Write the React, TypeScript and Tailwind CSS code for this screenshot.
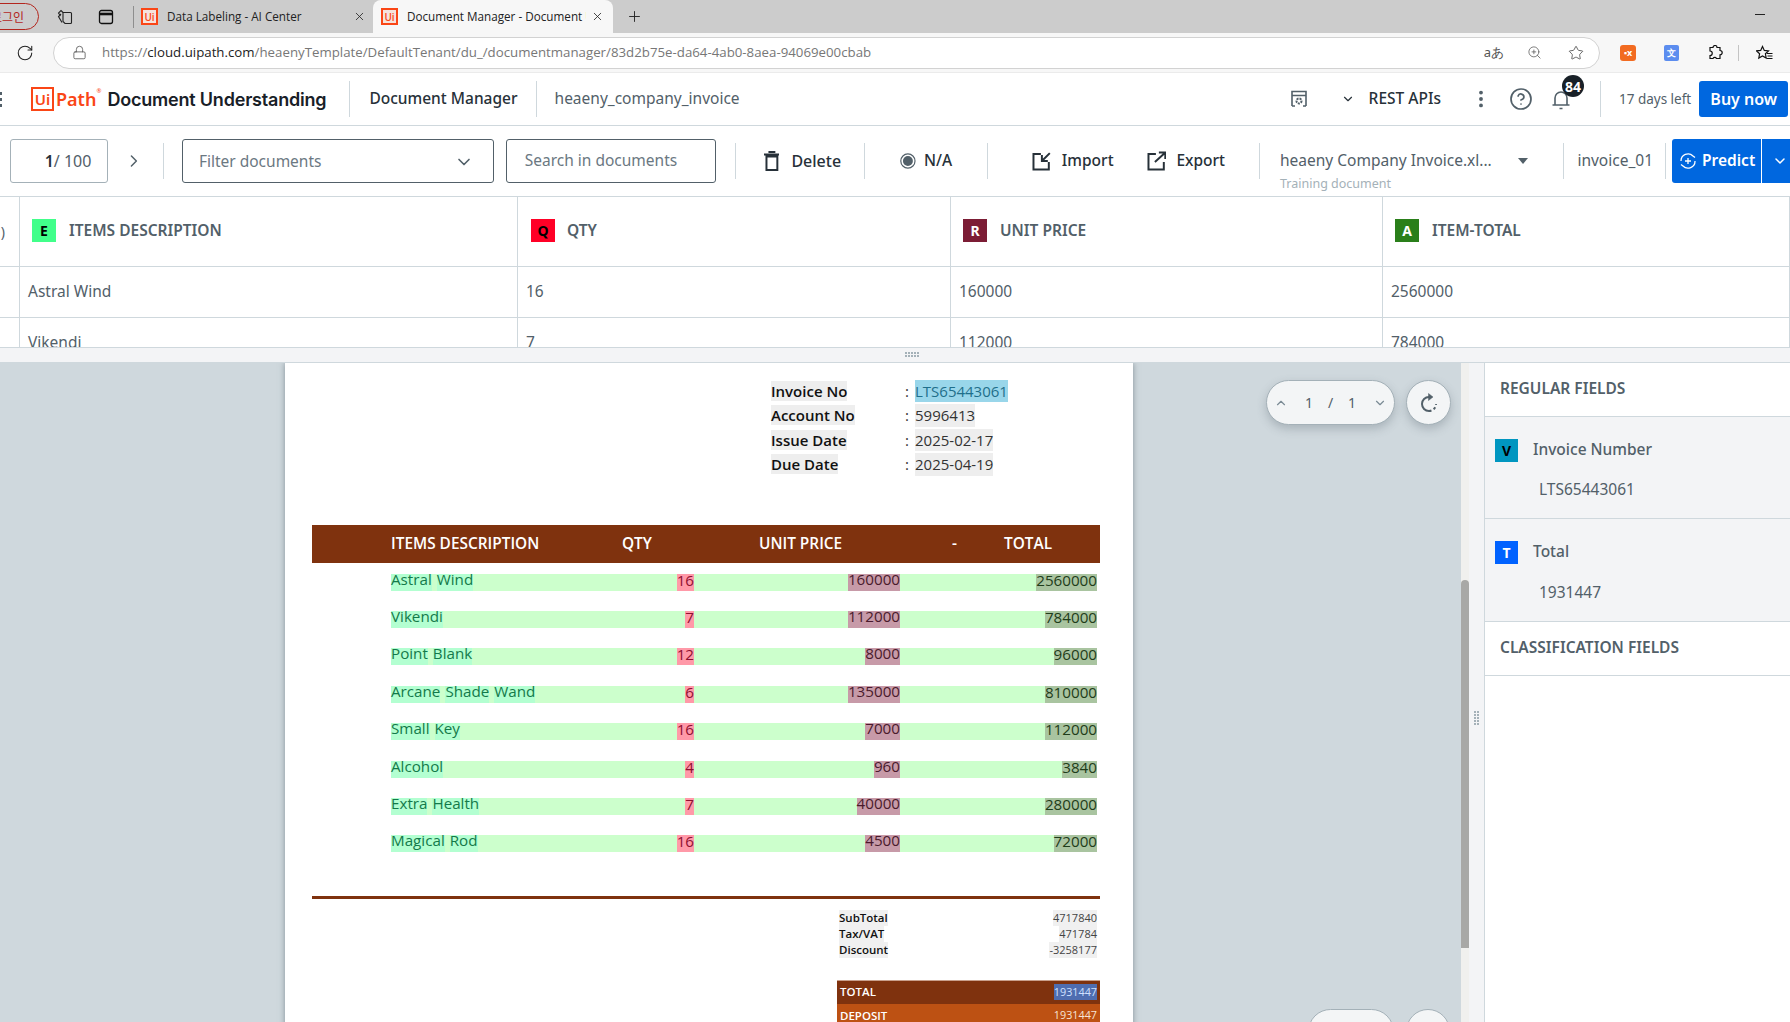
import {
  ChevronDown,
  ChevronRight,
  ChevronUp,
  CircleHelp,
  EllipsisVertical,
  Lock,
  Plus,
  RotateCw,
  Star,
  X,
  ZoomIn,
} from "lucide-react";

const tableRows = [
  { item: "Astral Wind", qty: "16", price: "160000", total: "2560000" },
  { item: "Vikendi", qty: "7", price: "112000", total: "784000" },
  { item: "Point Blank", qty: "12", price: "8000", total: "96000" },
  { item: "Arcane Shade Wand", qty: "6", price: "135000", total: "810000" },
  { item: "Small Key", qty: "16", price: "7000", total: "112000" },
  { item: "Alcohol", qty: "4", price: "960", total: "3840" },
  { item: "Extra Health", qty: "7", price: "40000", total: "280000" },
  { item: "Magical Rod", qty: "16", price: "4500", total: "72000" },
];

const invoiceMeta = [
  { label: "Invoice No", value: "LTS65443061", selected: true },
  { label: "Account No", value: "5996413", selected: false },
  { label: "Issue Date", value: "2025-02-17", selected: false },
  { label: "Due Date", value: "2025-04-19", selected: false },
];

const summary = [
  { label: "SubTotal", value: "4717840" },
  { label: "Tax/VAT", value: "471784" },
  { label: "Discount", value: "-3258177" },
];

function Favicon() {
  return (
    <span className="flex h-[17px] w-[17px] shrink-0 items-center justify-center border-2 border-[#fa4616] bg-[#f5e3dc] font-['Open_Sans',sans-serif] text-[10px] leading-none font-semibold text-[#fa4616]">
      Ui
    </span>
  );
}

function Divider({ className = "" }: { className?: string }) {
  return <div className={`h-[36px] w-px shrink-0 bg-[#cfd8dd] ${className}`} />;
}

function Chip({ letter, className }: { letter: string; className: string }) {
  return (
    <span
      className={`flex h-[23px] shrink-0 items-center justify-center text-[14px] font-bold ${className}`}
    >
      {letter}
    </span>
  );
}

function ColHeader({
  letter,
  chip,
  label,
  pad = "pl-[12px]",
  gap = "ml-[13px]",
}: {
  letter: string;
  chip: string;
  label: string;
  pad?: string;
  gap?: string;
}) {
  return (
    <div className={`flex h-[69px] items-center border-r border-[#cfd8dd] pb-[2px] ${pad}`}>
      <Chip letter={letter} className={`w-[24px] ${chip}`} />
      <span className={`text-[15.5px] font-semibold text-[#526069] ${gap}`}>
        {label}
      </span>
    </div>
  );
}

function Cell({ text }: { text: string }) {
  return (
    <div className="flex h-[50px] items-center border-r border-[#cfd8dd] pb-[1px] pl-[8px] text-[15.5px] text-[#526069]">
      {text}
    </div>
  );
}

function GripDots({ rows, cols }: { rows: number; cols: number }) {
  const dots = [];
  for (let r = 0; r < rows; r++) {
    for (let c = 0; c < cols; c++) {
      dots.push(
        <rect key={`${r}-${c}`} x={c * 3} y={r * 3} width="2" height="2" />,
      );
    }
  }
  return (
    <svg width={cols * 3} height={rows * 3} fill="#a4b1b8">
      {dots}
    </svg>
  );
}

export default function App() {
  return (
    <div className="flex h-screen w-screen flex-col overflow-hidden bg-white font-['Noto_Sans',sans-serif] text-[#273139]">
      {/* browser tabs */}
      <div className="flex h-[33px] shrink-0 items-center bg-[#cccccc]">
        <div className="ml-[-24px] flex h-[27px] w-[63px] items-center justify-center rounded-full border border-[#b3261e] font-['Noto_Sans_CJK_KR',sans-serif] text-[12px] text-[#b3261e]">
          로그인
        </div>
        <svg className="ml-[17px]" width="18" height="18" viewBox="0 0 18 18" fill="none" stroke="#222" strokeWidth="1.1">
          <path d="M7 4.5h7.5a1 1 0 0 1 1 1v9a1 1 0 0 1-1 1H9l-2-2z" />
          <path d="M5 6 2.5 8.5l3.5 6M7 4.5 5 2.5 2.5 5l2 3" />
        </svg>
        <svg className="ml-[24px]" width="16" height="16" viewBox="0 0 16 16" fill="none" stroke="#111" strokeWidth="1.3">
          <rect x="1.5" y="1.5" width="13" height="13" rx="2" />
          <path d="M1.5 5h13" strokeWidth="2.6" />
        </svg>
        <div className="ml-[19px] h-[22px] w-px bg-[#8e8e8e]" />
        <div className="flex h-full w-[239px] items-center pl-[7px]">
          <Favicon />
          <span className="ml-[9px] font-['Open_Sans',sans-serif] text-[11.7px] text-[#222]">
            Data Labeling - AI Center
          </span>
          <X className="mr-[7px] ml-auto" size={13} strokeWidth={1.5} color="#222" />
        </div>
        <div className="flex h-full w-[240px] items-center rounded-t-[8px] bg-[#f7f7f7] pl-[8px]">
          <Favicon />
          <span className="ml-[9px] w-[179px] overflow-hidden font-['Open_Sans',sans-serif] text-[11.7px] whitespace-nowrap text-[#222]">
            Document Manager - Document Understanding
          </span>
          <X className="ml-[5px]" size={13} strokeWidth={1.5} color="#222" />
        </div>
        <Plus className="ml-[13px]" size={17} strokeWidth={1.3} color="#222" />
        <div className="mt-[-4px] ml-[1112px] h-px w-[10px] bg-[#222]" />
      </div>

      {/* address bar */}
      <div className="flex h-[39px] shrink-0 items-center bg-[#f7f7f7]">
        <RotateCw className="ml-[16px]" size={18} strokeWidth={1.4} color="#222" />
        <div className="ml-[19px] flex h-[32px] w-[1547px] items-center rounded-full border border-[#d2d2d2] bg-white">
          <Lock className="ml-[18px]" size={15} strokeWidth={1.3} color="#555" />
          <span className="ml-[15px] font-['Open_Sans',sans-serif] text-[13.27px] text-[#777]">
            https://<span className="text-[#222]">cloud.uipath.com</span>
            /heaenyTemplate/DefaultTenant/du_/documentmanager/83d2b75e-da64-4ab0-8aea-94069e00cbab
          </span>
          <span className="ml-auto text-[13px] text-[#555]">aあ</span>
          <ZoomIn className="ml-[23px]" size={15} strokeWidth={1.2} color="#555" />
          <Star className="mr-[15px] ml-[26px]" size={16} strokeWidth={1.2} color="#444" />
        </div>
        <div className="ml-[20px] flex h-[16px] w-[16px] items-center justify-center rounded-[3px] bg-[#f26b21] text-[9px] font-bold text-white">
          ▪x
        </div>
        <div className="ml-[28px] flex h-[16px] w-[15px] items-center justify-center rounded-[2px] bg-[#5c8def] text-[9px] font-bold text-white">
          文
        </div>
        <svg className="ml-[28px]" width="16" height="16" viewBox="0 0 16 16" fill="none" stroke="#111" strokeWidth="1.2">
          <path d="M6 2.5a2 2 0 0 1 4 0h3v3a2 2 0 0 1 0 4.4v3.6H9.5a2 2 0 0 0-3.5 0H3v-3a2 2 0 0 0 0-4.5v-3.5z" />
        </svg>
        <div className="ml-[15px] h-[16px] w-px bg-[#c4c4c4]" />
        <svg className="ml-[17px]" width="17" height="16" viewBox="0 0 17 16" fill="none" stroke="#111" strokeWidth="1.2">
          <path d="M6.5 1.5 8.3 5.4l4.2.5-3.1 2.9.8 4.2-3.7-2.1-3.7 2.1.8-4.2L.5 5.9l4.2-.5zM11 8.5h5.5M11.5 11h5M11 13.5h5.5" />
        </svg>
      </div>

      {/* app header */}
      <div className="flex h-[54px] shrink-0 items-center border-t border-b border-[#cfd8dd] border-t-[#ebebeb] bg-white">
        <div className="flex w-[3px] flex-col gap-[3px]">
          <div className="h-[3px] w-[2px] bg-[#526069]" />
          <div className="h-[3px] w-[2px] bg-[#526069]" />
          <div className="h-[3px] w-[2px] bg-[#526069]" />
        </div>
        <div className="ml-[28px] flex h-[24px] w-[23px] items-center justify-center border-2 border-[#fa4616] text-[15px] leading-none font-semibold text-[#fa4616]">
          Ui
        </div>
        <span className="relative ml-[2px] text-[18px] font-semibold text-[#fa4616]">
          Path
          <span className="absolute top-[2px] right-[-5px] text-[6px] leading-none font-normal">
            ®
          </span>
        </span>
        <span className="ml-[11px] font-['Inter',sans-serif] text-[18px] font-semibold tracking-[-0.2px] text-[#182027]">
          Document Understanding
        </span>
        <Divider className="ml-[23px]" />
        <span className="ml-[19px] text-[15.5px] font-medium">Document Manager</span>
        <Divider className="ml-[18px]" />
        <span className="ml-[18px] text-[15.5px] text-[#526069]">
          heaeny_company_invoice
        </span>
        <svg className="ml-[549px]" width="20" height="20" viewBox="0 0 20 20" fill="none" stroke="#526069" strokeWidth="1.6">
          <path d="M3 17V2.5h14V17M3 6.5h14M3 17h3M14 17h3" />
          <circle cx="10" cy="12" r="2.5" strokeWidth="2" strokeDasharray="2 1" />
        </svg>
        <ChevronDown className="ml-[32px]" size={14} strokeWidth={2} color="#273139" />
        <span className="ml-[14px] text-[15.5px] font-medium">REST APIs</span>
        <EllipsisVertical className="ml-[29px]" size={22} strokeWidth={2.2} color="#526069" />
        <CircleHelp className="ml-[17px]" size={24} strokeWidth={1.7} color="#526069" />
        <div className="relative ml-[16px] h-[24px] w-[24px]">
          <svg width="24" height="24" viewBox="0 0 24 24" fill="none" stroke="#526069" strokeWidth="1.6">
            <path d="M6 18V11a6 6 0 0 1 12 0v7M3.5 18h17M10.5 21.5h3" />
          </svg>
          <span className="absolute top-[-12px] left-[13px] flex h-[22px] w-[22px] items-center justify-center rounded-full bg-[#182027] text-[14px] font-bold text-white">
            84
          </span>
        </div>
        <Divider className="ml-[27px]" />
        <span className="ml-[18px] text-[13.5px] text-[#526069]">17 days left</span>
        <button className="ml-[8px] flex h-[36px] w-[89px] items-center justify-center rounded-[3px] bg-[#0067df] text-[16px] font-semibold text-white">
          Buy now
        </button>
      </div>

      {/* toolbar */}
      <div className="flex h-[71px] shrink-0 items-center border-b border-[#cfd8dd] bg-white">
        <div className="ml-[10px] flex h-[44px] w-[99px] items-center justify-center rounded-[3px] border border-[#a4b1b8] pl-[18px] text-[16px] text-[#526069]">
          <b className="font-semibold text-[#273139]">1</b>/ 100
        </div>
        <ChevronRight className="ml-[16px]" size={20} strokeWidth={1.8} color="#526069" />
        <Divider className="ml-[19px]" />
        <div className="ml-[18px] flex h-[44px] w-[315px] items-center justify-between rounded-[3px] border border-[#526069] pt-[2px] pr-[19px] pl-[16px] text-[15.5px] text-[#6b7882]">
          Filter documents
          <ChevronDown size={20} strokeWidth={2} color="#526069" />
        </div>
        <div className="ml-[12px] flex h-[44px] w-[212px] items-center rounded-[3px] border border-[#526069] pl-[18px] text-[15.5px] text-[#6b7882]">
          Search in documents
        </div>
        <Divider className="ml-[19px]" />
        <svg className="ml-[28px]" width="16" height="20" viewBox="0 0 16 20" fill="none" stroke="#273139" strokeWidth="2">
          <path d="M2.5 5.5h11V19h-11zM0 3.5h16M4.5 1h7" />
        </svg>
        <span className="ml-[12px] text-[16px] font-medium">Delete</span>
        <Divider className="ml-[23px]" />
        <svg className="ml-[35px]" width="16" height="16" viewBox="0 0 16 16">
          <circle cx="8" cy="8" r="7.2" fill="none" stroke="#526069" strokeWidth="1.2" />
          <circle cx="8" cy="8" r="5" fill="#526069" />
        </svg>
        <span className="ml-[8px] text-[15.5px] font-medium">N/A</span>
        <Divider className="ml-[35px]" />
        <svg className="ml-[44px]" width="20" height="20" viewBox="0 0 20 20" fill="none" stroke="#273139" strokeWidth="2">
          <path d="M9 3H1.5v15.5H17V11M18 2l-8 8M10 4v6h6" />
        </svg>
        <span className="ml-[10px] text-[15.5px] font-medium">Import</span>
        <svg className="ml-[33px]" width="20" height="20" viewBox="0 0 20 20" fill="none" stroke="#273139" strokeWidth="2">
          <path d="M9 3H1.5v15.5H17V11M8 11l10-9M12 1.5h6.500V8" />
        </svg>
        <span className="ml-[10px] text-[15.5px] font-medium">Export</span>
        <Divider className="ml-[34px]" />
        <div className="relative ml-[20px] flex w-[230px] items-center text-[15.5px] text-[#526069]">
          heaeny Company Invoice.xl...
          <span className="absolute top-[26px] left-0 text-[12.5px] whitespace-nowrap text-[#a4b1b8]">
            Training document
          </span>
          <span className="absolute top-[9px] left-[238px] h-0 w-0 border-x-[5px] border-t-[6px] border-x-transparent border-t-[#526069]" />
        </div>
        <Divider className="ml-[56px]" />
        <span className="ml-[13px] text-[15.5px] text-[#526069]">invoice_01</span>
        <Divider className="ml-[12px]" />
        <div className="ml-[6px] flex h-[44px] w-[118px] shrink-0 items-center rounded-l-[3px] bg-[#0067df] text-white">
          <svg className="ml-[7px]" width="18" height="18" viewBox="0 0 18 18" fill="none" stroke="#fff" strokeWidth="1.3">
            <path d="M2 9a7 7 0 0 1 12-5l2 1.5M16 9a7 7 0 0 1-12 5l-2-1.5M9 6v6M6 9h6" />
          </svg>
          <span className="ml-[5px] text-[15.5px] font-semibold">Predict</span>
          <div className="ml-[6px] h-full w-px bg-white" />
          <ChevronDown className="ml-[10px]" size={16} strokeWidth={2.2} color="#fff" />
        </div>
      </div>

      {/* extraction table */}
      <div className="h-[150px] shrink-0 overflow-hidden bg-white">
        <div className="grid w-[1790px] grid-cols-[20px_498px_433px_432px_407px]">
          <div className="flex h-[69px] items-center justify-end overflow-hidden border-r border-[#cfd8dd] text-[14px] text-[#526069]">
            <span className="mr-[14px]">)</span>
          </div>
          <ColHeader letter="E" chip="bg-[#41ff8a] text-black" label="ITEMS DESCRIPTION" />
          <ColHeader letter="Q" chip="bg-[#ff0026] text-black" label="QTY" pad="pl-[13px]" gap="ml-[12px]" />
          <ColHeader letter="R" chip="bg-[#7c1d35] text-white" label="UNIT PRICE" />
          <ColHeader letter="A" chip="bg-[#2a7f1a] text-white" label="ITEM-TOTAL" />
        </div>
        {[
          ["Astral Wind", "16", "160000", "2560000"],
          ["Vikendi", "7", "112000", "784000"],
        ].map((row) => (
          <div
            key={row[0]}
            className="grid w-[1790px] grid-cols-[20px_498px_433px_432px_407px] border-t border-[#cfd8dd]"
          >
            <div className="border-r border-[#cfd8dd]" />
            {row.map((text) => (
              <Cell key={text} text={text} />
            ))}
          </div>
        ))}
      </div>

      {/* horizontal splitter */}
      <div className="flex h-[16px] shrink-0 items-center border-y border-[#cfd8dd] bg-[#f3f4f6] pl-[905px]">
        <GripDots rows={2} cols={5} />
      </div>

      {/* viewer + fields */}
      <div className="flex min-h-0 flex-1">
        <div className="relative w-[1461px] shrink-0 overflow-hidden bg-[#cfd8dd]">
          <div className="ml-[285px] w-[848px] bg-white pt-[16px] pr-[33px] pl-[27px] font-['Open_Sans',sans-serif] shadow-[0_0_6px_rgba(82,96,105,0.6)]">
            <div className="pl-[459px]">
              {invoiceMeta.map((m) => (
                <div key={m.label} className="flex h-[24.4px] items-center text-[15px]">
                  <span className="w-[134px] font-semibold text-[#111]">
                    <span className="bg-[#eeeeee]">{m.label}</span>
                  </span>
                  <span className="w-[10px] text-[#333]">:</span>
                  <span
                    className={
                      m.selected
                        ? "bg-[#99d6ea] text-[#1f6f8b]"
                        : "bg-[#eeeeee] text-[#333]"
                    }
                  >
                    {m.value}
                  </span>
                </div>
              ))}
            </div>

            <div className="mt-[48px] flex h-[38px] items-center bg-[#7f320e] text-[15.4px] font-semibold text-white">
              <span className="ml-[79px] w-[231px]">ITEMS DESCRIPTION</span>
              <span className="w-[137px]">QTY</span>
              <span className="w-[193px]">UNIT PRICE</span>
              <span className="w-[52px]">-</span>
              <span>TOTAL</span>
            </div>

            <div className="mt-[11px] ml-[79px] flex w-[706px] flex-col gap-[20.4px]">
              {tableRows.map((r) => (
                <div
                  key={r.item}
                  className="grid h-[17px] grid-cols-[240px_63px_206px_197px] bg-[#ccffcc] text-[15.2px]"
                >
                  <span className="flex gap-[5px] text-[#137a4a]">
                    {r.item.split(" ").map((word) => (
                      <span key={word} className="h-[17px] bg-[#b3ffd1] leading-[10px]">
                        {word}
                      </span>
                    ))}
                  </span>
                  <span className="text-right text-[#8f1030]">
                    <span className="inline-block h-[17px] bg-[#ff99a8] leading-[13px] align-top">{r.qty}</span>
                  </span>
                  <span className="text-right text-[#4a1a2c]">
                    <span className="inline-block h-[17px] bg-[#c79aa8] leading-[10px] align-top">{r.price}</span>
                  </span>
                  <span className="text-right text-[#1f3d1a]">
                    <span className="inline-block h-[17px] bg-[#a9c4a0] leading-[13px] align-top">{r.total}</span>
                  </span>
                </div>
              ))}
            </div>

            <div className="mt-[44px] h-[3px] bg-[#7f320e]" />

            <div className="mt-[11px] ml-[527px] pr-[3px] text-[11.5px] leading-[16px]">
              {summary.map((s) => (
                <div key={s.label} className="flex justify-between">
                  <span className="bg-[#f0f0f0] font-semibold text-[#111]">{s.label}</span>
                  <span className="bg-[#f0f0f0] text-[11px] text-[#444]">{s.value}</span>
                </div>
              ))}
            </div>

            <div className="mt-[22px] ml-[525px] pb-[60px] text-[11.5px] text-white">
              <div className="flex h-[24px] items-center justify-between border-t border-[#c9a08c] bg-[#7f320e] px-[3px] pb-[2px] font-semibold">
                TOTAL
                <span className="bg-[#4f6db0] text-[10.8px] font-normal text-[#cfe0ff]">1931447</span>
              </div>
              <div className="flex h-[24px] items-center justify-between bg-[#bd5113] px-[3px] pb-[2px] font-semibold">
                DEPOSIT
                <span className="text-[10.8px] font-normal text-[#f6e3d6]">1931447</span>
              </div>
            </div>
          </div>

          {/* floating page controls */}
          <div className="absolute top-[17px] right-[66px] flex h-[45px] w-[129px] items-center justify-between rounded-full border border-[#a4b1b8] bg-[#f3f5f6] px-[7px] text-[14px] text-[#526069] shadow-[0_4px_10px_rgba(82,96,105,0.3)]">
            <ChevronUp size={14} color="#7a8a94" />
            <span className="flex gap-[15px]">
              <span>1</span>
              <span>/</span>
              <span>1</span>
            </span>
            <ChevronDown size={14} color="#7a8a94" />
          </div>
          <div className="absolute top-[17px] right-[10px] flex h-[45px] w-[45px] items-center justify-center rounded-full border border-[#a4b1b8] bg-[#f3f5f6] shadow-[0_4px_10px_rgba(82,96,105,0.3)]">
            <svg width="20" height="20" viewBox="0 0 20 20" fill="none" stroke="#526069" strokeWidth="2">
              <path d="M10 4a7 7 0 0 0 0 14" />
              <path d="M10 18a7 7 0 0 0 7-7" strokeDasharray="2.5 2.5" />
              <path d="M9.5 0.5 14 4l-4.5 3.5z" fill="#526069" strokeWidth="0.5" />
            </svg>
          </div>
          <div className="absolute top-[646px] right-[67px] h-[45px] w-[86px] rounded-full border border-[#a4b1b8] bg-[#f3f5f6]" />
          <div className="absolute top-[646px] right-[11px] h-[45px] w-[44px] rounded-full border border-[#a4b1b8] bg-[#f3f5f6]" />
        </div>

        {/* viewer scrollbar */}
        <div className="w-[8px] shrink-0 bg-[#f0f0ee] pt-[217px]">
          <div className="h-[368px] rounded-t-[4px] bg-[#a8a8a6]" />
        </div>

        <div className="flex w-[15px] shrink-0 justify-center bg-[#f3f4f6] pt-[348px]">
          <GripDots rows={5} cols={2} />
        </div>

        {/* fields panel */}
        <div className="min-w-0 flex-1 border-l border-[#cfd8dd] bg-white">
          <div className="flex h-[54px] items-center border-b border-[#cfd8dd] pb-[2px] pl-[15px] text-[15.5px] font-semibold text-[#526069]">
            REGULAR FIELDS
          </div>
          <div className="h-[102px] border-b border-[#cfd8dd] bg-[#f3f4f6] pt-[21px]">
            <div className="flex items-center pl-[10px]">
              <Chip letter="V" className="w-[23px] bg-[#0096c0] text-black" />
              <span className="ml-[15px] pb-[2px] text-[15.5px] font-medium text-[#526069]">
                Invoice Number
              </span>
            </div>
            <div className="mt-[16px] pl-[54px] text-[15.5px] leading-[20px] text-[#526069]">
              LTS65443061
            </div>
          </div>
          <div className="h-[103px] border-b border-[#cfd8dd] bg-[#f3f4f6] pt-[21px]">
            <div className="flex items-center pl-[10px]">
              <Chip letter="T" className="w-[23px] bg-[#0062ff] text-white" />
              <span className="ml-[15px] pb-[2px] text-[15.5px] font-medium text-[#526069]">
                Total
              </span>
            </div>
            <div className="mt-[17px] pl-[54px] text-[15.5px] leading-[20px] text-[#526069]">
              1931447
            </div>
          </div>
          <div className="flex h-[54px] items-center border-b border-[#cfd8dd] pb-[2px] pl-[15px] text-[15.5px] font-semibold text-[#526069]">
            CLASSIFICATION FIELDS
          </div>
        </div>
      </div>
    </div>
  );
}
